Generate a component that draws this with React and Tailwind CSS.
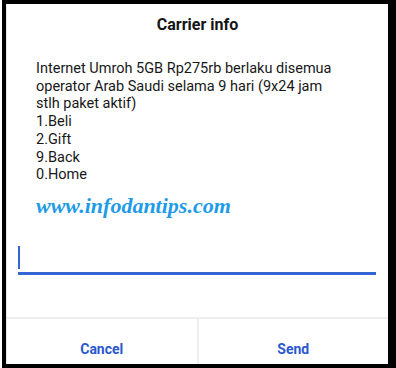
import React from "react";

export default function App() {
  return (
    <div className="w-[396px] h-[368px] bg-white" style={{ fontFamily: "Roboto, 'Noto Sans', sans-serif" }}>
      <div className="ml-[2px] w-[394px] h-[368px] border-t-4 border-l-4 border-r-8 border-b-4 border-black flex flex-col bg-white">
        <div className="flex-1 flex flex-col border-l border-[#e6e6e6]">
          <div className="h-[40px] flex items-center justify-center pt-[1px]">
            <span className="text-[16px] font-bold text-[#141414]">Carrier info</span>
          </div>
          <div className="pl-[29px] w-[335px] pt-[16px] text-[14.5px] leading-[17.7px] text-[#181818]">
            <div>Internet Umroh 5GB Rp275rb berlaku disemua operator Arab Saudi selama 9 hari (9x24 jam stlh paket aktif)</div>
            <div>1.Beli</div>
            <div>2.Gift</div>
            <div>9.Back</div>
            <div>0.Home</div>
          </div>
          <div
            className="pl-[29px] mt-[7px] text-[22px] leading-[30px] font-bold italic text-[#1e9be8]"
            style={{ fontFamily: "'Liberation Serif', 'DejaVu Serif', serif" }}
          >
            www.infodantips.com
          </div>
          <div className="ml-[11px] w-[358px] mt-[25px] h-[29px] border-b-[3px] border-[#3465d4] flex items-start">
            <div className="w-[2px] h-[23px] bg-[#3465d4]"></div>
          </div>
          <div className="flex-1"></div>
          <div className="h-[47px] flex border-t-[2px] border-[#eeeeee]">
            <div className="flex-1 flex items-center justify-center pt-[16px] text-[14px] font-bold text-[#2b59cf] border-r-[2px] border-[#eeeeee]">
              Cancel
            </div>
            <div className="flex-1 flex items-center justify-center pt-[16px] text-[14px] font-bold text-[#2b59cf]">
              Send
            </div>
          </div>
        </div>
      </div>
    </div>
  );
}
